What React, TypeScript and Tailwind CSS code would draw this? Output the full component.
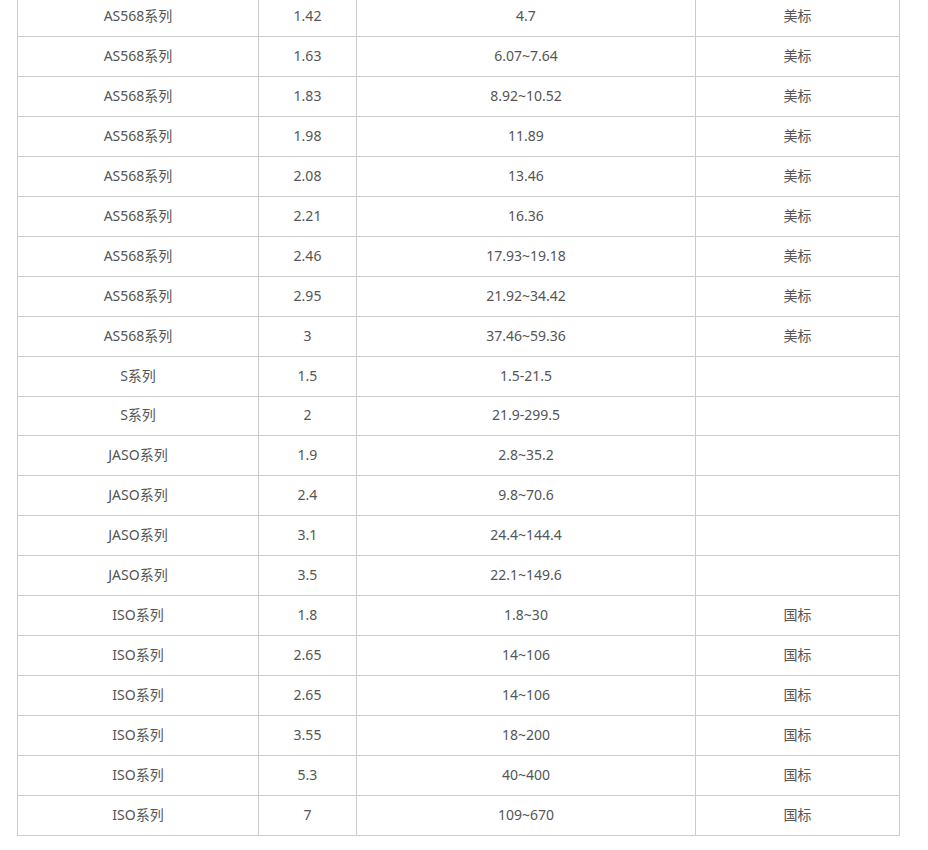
import React from 'react';

const rows: [string, string, string, string][] = [
  ['AS568系列', '1.42', '4.7', '美标'],
  ['AS568系列', '1.63', '6.07~7.64', '美标'],
  ['AS568系列', '1.83', '8.92~10.52', '美标'],
  ['AS568系列', '1.98', '11.89', '美标'],
  ['AS568系列', '2.08', '13.46', '美标'],
  ['AS568系列', '2.21', '16.36', '美标'],
  ['AS568系列', '2.46', '17.93~19.18', '美标'],
  ['AS568系列', '2.95', '21.92~34.42', '美标'],
  ['AS568系列', '3', '37.46~59.36', '美标'],
  ['S系列', '1.5', '1.5-21.5', ''],
  ['S系列', '2', '21.9-299.5', ''],
  ['JASO系列', '1.9', '2.8~35.2', ''],
  ['JASO系列', '2.4', '9.8~70.6', ''],
  ['JASO系列', '3.1', '24.4~144.4', ''],
  ['JASO系列', '3.5', '22.1~149.6', ''],
  ['ISO系列', '1.8', '1.8~30', '国标'],
  ['ISO系列', '2.65', '14~106', '国标'],
  ['ISO系列', '2.65', '14~106', '国标'],
  ['ISO系列', '3.55', '18~200', '国标'],
  ['ISO系列', '5.3', '40~400', '国标'],
  ['ISO系列', '7', '109~670', '国标'],
];

const App: React.FC = () => {
  return (
    <div className="min-h-[850px] bg-white pl-[17px] pt-px font-['Noto_Sans','Noto_Sans_CJK_SC',sans-serif] text-[14px] text-[#555]">
      <table className="mt-[-5px] w-[882px] table-fixed border-collapse">
        <colgroup>
          <col className="w-[241px]" />
          <col className="w-[98px]" />
          <col className="w-[339px]" />
          <col className="w-[204px]" />
        </colgroup>
        <tbody>
          {rows.map((r, i) => (
            <tr key={i} className={i === 10 ? 'h-[39px]' : 'h-[40px]'}>
              {r.map((c, j) => (
                <td key={j} className="border border-[#cccccc] p-0 pb-[2px] text-center align-middle leading-[20px]">
                  {c}
                </td>
              ))}
            </tr>
          ))}
        </tbody>
      </table>
    </div>
  );
};

export default App;
